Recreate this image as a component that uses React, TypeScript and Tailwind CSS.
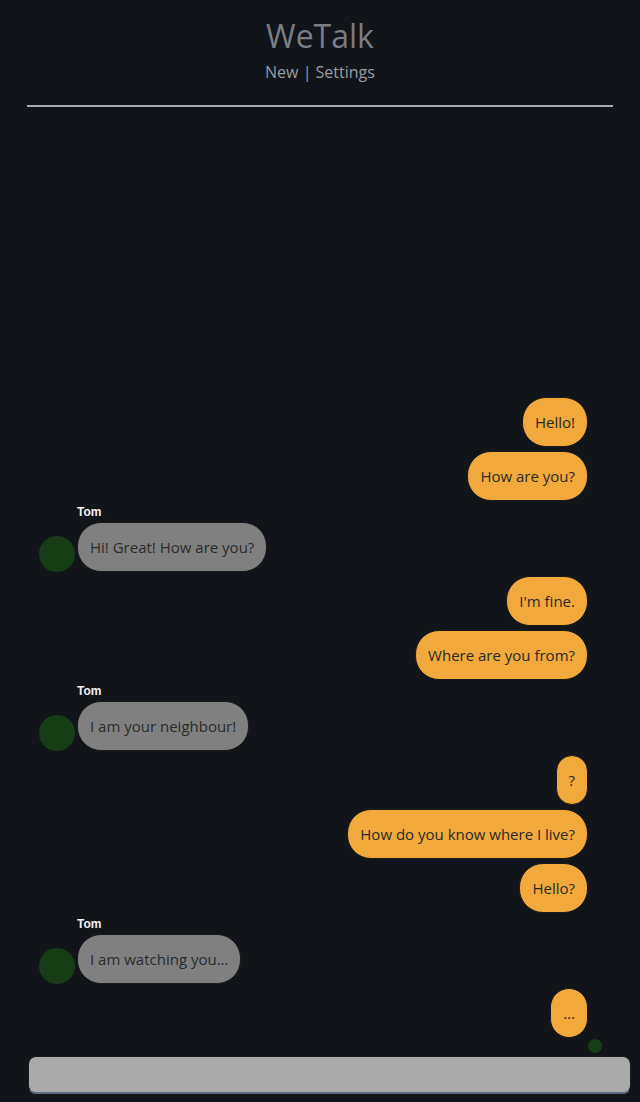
type Msg = { from: "me" | "tom"; text: string };

const messages: Msg[] = [
  { from: "me", text: "Hello!" },
  { from: "me", text: "How are you?" },
  { from: "tom", text: "Hi! Great! How are you?" },
  { from: "me", text: "I'm fine." },
  { from: "me", text: "Where are you from?" },
  { from: "tom", text: "I am your neighbour!" },
  { from: "me", text: "?" },
  { from: "me", text: "How do you know where I live?" },
  { from: "me", text: "Hello?" },
  { from: "tom", text: "I am watching you..." },
  { from: "me", text: "..." },
];

function Bubble({ msg }: { msg: Msg }) {
  if (msg.from === "me") {
    return (
      <div className="flex justify-end pr-[14px] mt-[4px]">
        <div className="rounded-[24px] border border-[#1a1a1a] bg-[#f2a93b] px-3 py-[12px] text-[15px] leading-[24px] text-[#2a2a2a]">
          {msg.text}
        </div>
      </div>
    );
  }
  return (
    <div className="mt-[4px] flex flex-col">
      <span className="ml-[38px] mb-[3px] font-['Liberation_Sans',sans-serif] text-[12px] font-bold leading-[14px] text-[#f0f0f0]">
        Tom
      </span>
      <div className="flex items-end gap-[2px]">
        <div className="h-[36px] w-[36px] shrink-0 rounded-full bg-[#173d17]" />
        <div className="rounded-[24px] border border-[#1a1a1a] bg-[#808080] px-3 py-[12px] text-[15px] leading-[24px] text-[#2b2b2b]">
          {msg.text}
        </div>
      </div>
    </div>
  );
}

export default function App() {
  return (
    <div className="flex h-[1102px] flex-col bg-[#111419] font-['Open_Sans',sans-serif]">
      <header className="mx-[27px] flex flex-col items-center border-b-2 border-[#aaa8b0] pt-[17px] pb-[22px]">
        <h1 className="text-[32px] leading-[38px] text-[#7b7d85]">WeTalk</h1>
        <nav className="mt-[6px] text-[16px] leading-[22px] text-[#9a9ca3]">
          New | Settings
        </nav>
      </header>

      <main className="flex flex-1 flex-col justify-end pl-[39px] pr-[38px]">
        {messages.map((m, i) => (
          <Bubble key={i} msg={m} />
        ))}
        <div className="flex justify-end">
          <div className="mt-[1px] h-[14px] w-[14px] rounded-full bg-[#173d17]" />
        </div>
      </main>

      <div className="mt-[3px] mb-[8px] ml-[28px] mr-[9px]">
        <input
          className="h-[38px] w-full rounded-[8px] border border-[#1a1a1a] border-b-2 border-b-[#5d6b80] bg-[#aaaaaa] px-3 outline-none"
          type="text"
        />
      </div>
    </div>
  );
}
